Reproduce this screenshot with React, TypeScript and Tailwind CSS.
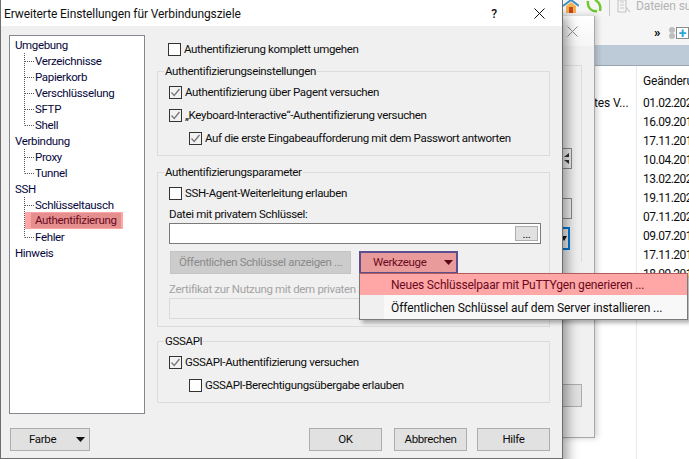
import React from "react";

const Connector = ({ last }: { last?: boolean }) => (
  <svg width="10" height="16" className="ml-[14px] shrink-0" viewBox="0 0 10 16">
    <path d={last ? "M0.5 0V8.5" : "M0.5 0V16"} stroke="#555" strokeDasharray="1 1" fill="none" />
    <path d="M1 8.5H10" stroke="#555" strokeDasharray="1 1" fill="none" />
  </svg>
);

const Top = ({ children }: { children: React.ReactNode }) => (
  <div className="h-4 pl-[5px] leading-4 text-[#06063a]">{children}</div>
);

const Child = ({ children, last }: { children: React.ReactNode; last?: boolean }) => (
  <div className="flex h-4 items-center leading-4 text-[#06063a]">
    <Connector last={last} />
    <span className="pl-[1px]">{children}</span>
  </div>
);

const Check = ({ checked, label, indent }: { checked?: boolean; label: string; indent?: boolean }) => (
  <div className={`flex h-4 items-center gap-[3px] leading-4 text-[#0d0d0d] ${indent ? "ml-[31px]" : "ml-[11px]"}`}>
    <span className={`flex h-[13px] w-[13px] shrink-0 items-center justify-center border border-[#333] ${checked ? "bg-[#f2f2f2]" : "bg-white"}`}>
      {checked && (
        <svg width="11" height="11" viewBox="0 0 11 11">
          <path d="M1.5 5.5L4.2 8.5L9.5 2" stroke="#777" strokeWidth="1.3" fill="none" />
        </svg>
      )}
    </span>
    <span className="whitespace-nowrap">{label}</span>
  </div>
);

const Group = ({ title, className, children }: { title: string; className: string; children: React.ReactNode }) => (
  <fieldset className={`border border-[#dcdcdc] ${className}`}>
    <legend className="ml-[6px] bg-[#f0f0f0] px-[1px] leading-4 text-[#0d0d0d]">{title}</legend>
    {children}
  </fieldset>
);

const Btn = ({ label, className }: { label: string; className: string }) => (
  <div className={`flex h-[23px] items-center justify-center border border-[#adadad] bg-[#e1e1e1] text-[#0d0d0d] ${className}`}>{label}</div>
);

const dates = ["01.02.2021", "16.09.2019", "17.11.2019", "10.04.2019", "13.02.2021", "19.11.2020", "07.11.2020", "09.07.2019", "17.11.2018", "18.09.2019"];

export default function App() {
  return (
    <div className="relative h-[459px] w-[689px] overflow-hidden bg-white font-['Roboto',sans-serif] text-[12px] tracking-[-0.1px]">
      {/* background application */}
      <div className="absolute inset-0 flex flex-col">
        <div className="h-[45px] bg-[#f5f5f5]">
          <div className="flex h-[16px] items-start pl-[563px]">
            <svg width="16" height="13" viewBox="0 0 16 13" className="shrink-0">
              <path d="M0 6L8 0L16 6" stroke="#3d8fc4" strokeWidth="2" fill="none" />
              <path d="M3 6L8 2L13 6V13H3Z" fill="#f4b34f" />
              <rect x="6" y="7" width="4" height="6" fill="#c9431f" />
            </svg>
            <svg width="16" height="13" viewBox="0 0 16 13" className="ml-[7px] shrink-0">
              <path d="M2 1C1 8 6 12 11 11M14 11C15 6 13 2 9 0" stroke="#6fc72b" strokeWidth="2.4" fill="none" />
            </svg>
            <div className="ml-[7px] h-[16px] w-px shrink-0 bg-[#c9c9c9]" />
            <svg width="15" height="13" viewBox="0 0 15 13" className="ml-[7px] shrink-0">
              <path d="M1 0H9V12H1ZM3 2H7M3 5H7M3 8H7M9 7L13 12" stroke="#c8c8c8" strokeWidth="1.2" fill="none" />
            </svg>
            <span className="ml-[4px] whitespace-nowrap leading-[12px] text-[#b4b4b4]">Dateien suchen</span>
          </div>
          <div className="mt-[10px] flex h-[14px] items-center pl-[654px]">
            <span className="w-[14px] text-[13px] font-bold leading-[10px] text-black">»</span>
            <div className="ml-[1px] h-[12px] w-[3px] border-y-[6px] border-dotted border-[#bdbdbd]" />
            <div className="ml-[4px] flex h-[12px] w-[13px] shrink-0 items-center justify-center border border-[#8a8a8a] bg-white text-[14px] font-bold leading-[10px] text-[#29a8d8]">+</div>
          </div>
        </div>
        <div className="h-[21px] border-b border-b-[#9aa6b2] bg-[#bdcbd9]" />
        <div className="flex flex-1 pl-[594px] text-[#0d0d0d]">
          <div className="w-[43px] shrink-0 border-r border-[#e3eaf4] pt-[29px] leading-4">
            <span className="whitespace-nowrap">tes V...</span>
          </div>
          <div className="flex flex-col whitespace-nowrap pl-[6px] pt-[7px] tracking-[-0.5px]">
            <div className="mb-[5px] h-4 leading-4 tracking-[-0.2px]">Geänderungsdatum</div>
            {dates.map((d, i) => (
              <div key={i} className="h-[19px] leading-[19px]">{d}</div>
            ))}
          </div>
        </div>
      </div>

      {/* second dialog behind */}
      <div className="absolute left-[500px] top-4 flex h-[422px] w-[95px] flex-col border-r border-b border-[#a8a8a8] bg-[#f0f0f0] shadow-[2px_0_6px_rgba(0,0,0,0.2)]">
        <div className="flex h-[30px] items-center justify-end bg-gradient-to-b from-white to-[#f6f6f6] pr-[16px]">
          <svg width="11" height="11" viewBox="0 0 11 11">
            <path d="M0.5 0.5L10.5 10.5M10.5 0.5L0.5 10.5" stroke="#8d8d8d" fill="none" />
          </svg>
        </div>
        <div className="mr-[12px] mt-[19px] flex h-[197px] flex-col items-end border-r border-t border-[#dcdcdc] pr-[9px]">
          <div className="mt-[82px] flex h-[21px] w-[20px] flex-col items-end justify-center gap-[3px] border border-[#8a8a8a] bg-[#f0f0f0] pr-[2px]">
            <svg width="5" height="4" viewBox="0 0 5 4"><path d="M5 0V4H0Z" fill="#333" /></svg>
            <svg width="5" height="4" viewBox="0 0 5 4"><path d="M0 0H5V4Z" fill="#333" /></svg>
          </div>
          <div className="mt-[29px] h-[21px] w-[20px] border border-[#8a8a8a]" />
          <div className="mr-[2px] mt-[8px] flex h-[23px] w-[18px] items-center justify-end border-2 border-[#0078d7] pr-[1px]">
            <svg width="6" height="5" viewBox="0 0 6 5"><path d="M0 0H6L3 5Z" fill="#111" /></svg>
          </div>
        </div>
        <div className="mr-[12px] mt-[122px] h-[23px] border border-[#adadad] bg-[#e1e1e1]" />
      </div>

      {/* main dialog */}
      <div className="absolute left-0 top-0 flex h-[459px] w-[563px] flex-col border-x border-b border-[#6f6f6f] bg-[#f0f0f0] shadow-[4px_16px_12px_rgba(0,0,0,0.4)]">
        <div className="flex h-[26px] shrink-0 items-center bg-white pl-[3px] pr-[17px] pt-[1px] text-[#111]">
          <span className="flex-1 whitespace-nowrap">Erweiterte Einstellungen für Verbindungsziele</span>
          <span className="mr-[37px] font-medium">?</span>
          <svg width="11" height="11" viewBox="0 0 11 11">
            <path d="M0.5 0.5L10.5 10.5M10.5 0.5L0.5 10.5" stroke="#111" fill="none" />
          </svg>
        </div>

        <div className="flex gap-[12px] pl-[8px] pr-[12px] pt-[9px] text-[11.5px] tracking-[-0.34px]">
          <div className="h-[379px] w-[136px] shrink-0 border border-[#828790] bg-white pt-px">
            <Top>Umgebung</Top>
            <Child>Verzeichnisse</Child>
            <Child>Papierkorb</Child>
            <Child>Verschlüsselung</Child>
            <Child>SFTP</Child>
            <Child last>Shell</Child>
            <Top>Verbindung</Top>
            <Child>Proxy</Child>
            <Child last>Tunnel</Child>
            <Top>SSH</Top>
            <Child>Schlüsseltausch</Child>
            <div className="flex h-4 items-center">
              <svg width="10" height="16" className="ml-[14px] shrink-0" viewBox="0 0 10 16">
                <path d="M0.5 0V16" stroke="#555" strokeDasharray="1 1" fill="none" />
              </svg>
              <span className="relative -ml-[9px] -mt-px flex h-[17px] w-[98px] items-center bg-[#ffa6a6] pl-[6px]">
                <span className="h-[15px] w-[90px] whitespace-nowrap bg-[#e58e8e] pl-[4px] leading-[15px] text-[#6a0a22]">Authentifizierung</span>
              </span>
            </div>
            <Child last>Fehler</Child>
            <Top>Hinweis</Top>
          </div>

          <div className="w-[393px] shrink-0">
            <div className="mt-[6px]">
              <Check label="Authentifizierung komplett umgehen" />
            </div>
            <Group title="Authentifizierungseinstellungen" className="mt-[6px] flex h-[93px] flex-col gap-[7px] pt-[5px]">
              <Check checked label="Authentifizierung über Pagent versuchen" />
              <Check checked label="„Keyboard-Interactive“-Authentifizierung versuchen" />
              <Check checked indent label="Auf die erste Eingabeaufforderung mit dem Passwort antworten" />
            </Group>
            <Group title="Authentifizierungsparameter" className="mt-[8px] flex h-[163px] flex-col pt-[5px]">
              <Check label="SSH-Agent-Weiterleitung erlauben" />
              <div className="ml-[11px] mt-[5px] h-4 leading-4 text-[#0d0d0d]">Datei mit privatem Schlüssel:</div>
              <div className="ml-[11px] mt-[1px] flex h-[21px] w-[372px] items-center justify-end border border-[#7a7a7a] bg-white pr-[2px]">
                <div className="flex h-[15px] w-[23px] items-center justify-center border border-[#adadad] bg-[#e1e1e1] leading-[10px]">...</div>
              </div>
              <div className="ml-[12px] mt-[7px] flex gap-[8px]">
                <div className="flex h-[23px] w-[181px] items-center justify-center whitespace-nowrap border border-[#c4c4c4] bg-[#cccccc] text-[#8a8a8a]">Öffentlichen Schlüssel anzeigen ...</div>
                <div className="flex h-[23px] w-[99px] items-center border-2 border-[#5d4f8f] bg-[#e99a9a] pl-[12px] text-[#6a0a22]">
                  <span className="flex-1">Werkzeuge</span>
                  <svg width="9" height="5" viewBox="0 0 9 5" className="mr-[3px]"><path d="M0 0H9L4.5 5Z" fill="#5a0818" /></svg>
                </div>
              </div>
              <div className="ml-[11px] mt-[7px] h-4 whitespace-nowrap leading-4 text-[#a3a3a3]">Zertifikat zur Nutzung mit dem privaten Schlüssel:</div>
              <div className="ml-[11px] mt-px h-[21px] w-[372px] border border-[#d9d9d9] bg-[#f0f0f0]" />
            </Group>
            <Group title="GSSAPI" className="mt-[6px] flex h-[70px] flex-col gap-[7px] pt-[5px]">
              <Check checked label="GSSAPI-Authentifizierung versuchen" />
              <Check indent label="GSSAPI-Berechtigungsübergabe erlauben" />
            </Group>
          </div>
        </div>

        <div className="mt-[14px] flex pl-[9px] pr-[12px] text-[11.5px] tracking-[-0.34px]">
          <div className="flex h-[23px] w-[80px] items-center border border-[#adadad] bg-[#e1e1e1] pl-[18px] text-[#0d0d0d]">
            <span className="flex-1">Farbe</span>
            <svg width="9" height="5" viewBox="0 0 9 5" className="mr-[4px]"><path d="M0 0H9L4.5 5Z" fill="#111" /></svg>
          </div>
          <div className="flex-1" />
          <Btn label="OK" className="w-[73px]" />
          <Btn label="Abbrechen" className="ml-[12px] w-[73px]" />
          <Btn label="Hilfe" className="ml-[10px] w-[73px]" />
        </div>
      </div>

      {/* dropdown menu */}
      <div className="absolute left-[359px] top-[273px] h-[47px] w-[329px] border border-[#7a7a7a] border-t-[#b25c5c] bg-[#f8f8f8] shadow-[3px_3px_4px_rgba(0,0,0,0.3)]">
        <div className="flex h-[21px] items-center whitespace-nowrap bg-[#ffa6a6] pl-[31px] pt-px tracking-[-0.2px] text-[#6a0a22]">Neues Schlüsselpaar mit PuTTYgen generieren ...</div>
        <div className="flex h-[24px] items-center whitespace-nowrap">
          <div className="h-full w-[24px] bg-[#f0f0f0]" />
          <span className="pl-[7px] pt-px text-[#0d0d0d]">Öffentlichen Schlüssel auf dem Server installieren ...</span>
        </div>
      </div>
    </div>
  );
}
